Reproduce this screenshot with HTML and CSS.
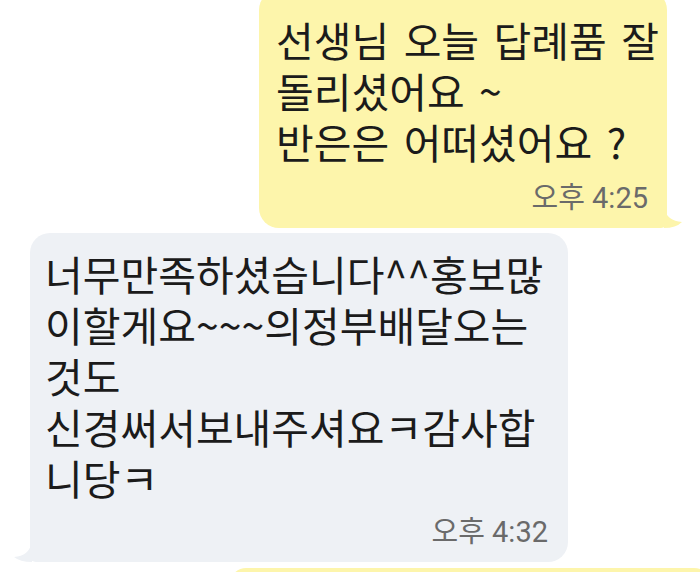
FILE: index.html
```html
<!DOCTYPE html>
<html lang="ko">
<head>
<meta charset="utf-8">
<link rel="stylesheet" href="styles.css">
</head>
<body>
<div class="chat">
  <div class="row mine">
    <div class="bubble yellow first">
      <p class="msg">선생님 오늘 답례품 잘<br>돌리셨어요 ~<br>반은은 어떠셨어요 ?</p>
      <div class="time">오후 4:25</div>
    </div>
  </div>
  <div class="row theirs">
    <div class="bubble gray">
      <p class="msg">너무만족하셨습니다^^홍보많<br>이할게요~~~의정부배달오는<br>것도<br>신경써서보내주셔요ㅋ감사합<br>니당ㅋ</p>
      <div class="time">오후 4:32</div>
    </div>
  </div>
  <div class="row mine">
    <div class="bubble yellow next"></div>
  </div>
</div>
</body>
</html>
```
FILE: styles.css
```css
html, body {
  margin: 0;
  padding: 0;
  background: #ffffff;
}
body {
  width: 700px;
  height: 572px;
  overflow: hidden;
  font-family: "Noto Sans CJK KR", "Noto Sans", sans-serif;
  color: #1b1b1b;
}
.chat {
  display: flex;
  flex-direction: column;
  gap: 5px;
  margin-top: -10px;
  height: 582px;
  overflow: hidden;
}
.row {
  display: flex;
  flex-shrink: 0;
}
.row.mine {
  justify-content: flex-end;
}
.bubble {
  position: relative;
  border-radius: 20px;
  box-sizing: border-box;
  flex-shrink: 0;
}
.yellow {
  background: #fdf5ab;
}
.first {
  width: 408px;
  height: 238px;
  margin-right: 33px;
  padding: 24px 17px 0 17px;
  border-bottom-right-radius: 6px;
}
.gray {
  width: 538px;
  height: 329px;
  margin-left: 30px;
  padding: 15px 20px 0 15px;
  background: #eef1f5;
  border-bottom-left-radius: 6px;
}
.next {
  width: 480px;
  height: 40px;
  margin-top: 1px;
  margin-right: -10px;
  border-radius: 16px;
}
.first::after {
  content: "";
  position: absolute;
  right: -17px;
  bottom: 0;
  width: 20px;
  height: 20px;
  background: #fdf5ab;
  clip-path: path('M0 0 Q3 13 18 14 Q12 20 0 20 Z');
}
.gray::after {
  content: "";
  position: absolute;
  left: -18px;
  bottom: 0;
  width: 20px;
  height: 20px;
  background: #eef1f5;
  clip-path: path('M20 0 Q17 14 2 15 Q8 20 20 20 Z');
}
.msg {
  margin: 0;
  font-size: 41px;
  line-height: 51px;
  white-space: nowrap;
}
.yellow .msg {
  word-spacing: 3px;
}
.time {
  text-align: right;
  font-family: Roboto, "Noto Sans CJK KR", sans-serif;
  font-size: 29px;
  line-height: 34px;
  color: #6a6a6a;
  margin-top: 12px;
}
.first .time {
  margin-top: 14px;
  margin-right: 2px;
}
```
